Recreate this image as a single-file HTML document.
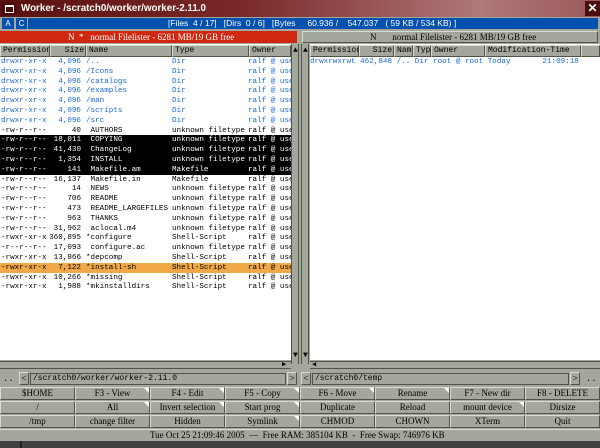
<!DOCTYPE html>
<html><head><meta charset="utf-8"><style>
*{margin:0;padding:0;box-sizing:border-box}
body{width:600px;height:448px;overflow:hidden;background:#a4a89c;position:relative;font-family:"Liberation Mono",monospace}
.a{position:absolute;white-space:pre}
.t{font-family:"Liberation Serif",serif}
.s{font-family:"Liberation Sans",sans-serif}
.row{position:absolute;height:10px;font-size:7.6px;line-height:10px;white-space:pre}
.row span{position:absolute;top:0}
.hd{position:absolute;top:45px;height:12px;background:#a4a89c;border:1px solid #d8dcd0;border-right-color:#505448;border-bottom-color:#505448;font-size:8px;line-height:10px;padding-left:2px;color:#000;overflow:hidden;white-space:nowrap;font-family:"Liberation Mono",monospace}
.btn{position:absolute;height:13px;width:75px;border:1px solid #d8dcd0;border-right-color:#505448;border-bottom-color:#505448;background:#a4a89c;font-family:"Liberation Serif",serif;font-size:9px;line-height:11px;text-align:center;color:#000}
.btn.m:after{content:"";position:absolute;right:0;top:0;border-left:5px solid transparent;border-top:5px solid #fff}
.sb{position:absolute;background:#a4a89c;border-left:1px solid #505448;border-right:1px solid #505448}
</style></head><body>
<div class="a" style="left:0;top:0;width:600px;height:17px;background:linear-gradient(90deg,#5a1010,#7a2828 40%,#b07878 80%,#9a5858)"></div>
<div class="a" style="left:2px;top:2px;width:14px;height:13px;background:#4a0c0c"></div>
<div class="a" style="left:5px;top:5px;width:9px;height:8px;border:1px solid #fff;border-top-width:2px"></div>
<div class="a s" style="left:21px;top:1px;font-size:9.8px;line-height:15px;color:#fff;font-weight:bold">Worker - /scratch0/worker/worker-2.11.0</div>
<div class="a" style="left:585px;top:1px;width:15px;height:15px;background:#4a0c0c;color:#fff;font:bold 12px/15px 'Liberation Sans',sans-serif;text-align:center">✕</div>
<div class="a" style="left:0;top:17px;width:600px;height:13px;background:#a4a89c"></div>
<div class="a s" style="left:2px;top:18px;width:12px;height:11px;background:#0050b0;color:#fff;font-size:8px;line-height:11px;text-align:center">A</div>
<div class="a s" style="left:16px;top:18px;width:11px;height:11px;background:#0050b0;color:#fff;font-size:8px;line-height:11px;text-align:center">C</div>
<div class="a" style="left:28px;top:18px;width:570px;height:11px;background:#0050b0"></div>
<div class="a s" style="left:168px;top:18px;font-size:8.5px;line-height:11px;color:#fff">[Files  4 / 17]   [Dirs  0 / 6]   [Bytes     60.936 /    547.037   ( 59 KB / 534 KB) ]</div>
<div class="a" style="left:0;top:31px;width:297px;height:12px;background:#d02810"></div>
<div class="a t" style="left:68px;top:31px;font-size:9px;line-height:12px;color:#fff">N  *   normal Filelister - 6281 MB/19 GB free</div>
<div class="a" style="left:302px;top:31px;width:296px;height:12px;background:#a4a89c;border:1px solid #d8dcd0;border-right-color:#505448;border-bottom-color:#505448"></div>
<div class="a t" style="left:370px;top:31px;font-size:9px;line-height:12px;color:#000">N       normal Filelister - 6281 MB/19 GB free</div>
<div class="a" style="left:0;top:44px;width:291px;height:316px;background:#fff"></div>
<div class="a" style="left:310px;top:44px;width:290px;height:316px;background:#fff"></div>
<div class="a" style="left:291px;top:44px;width:19px;height:330px;background:#a4a89c"></div>
<div class="sb" style="left:291px;top:44px;width:8px;height:320px"></div>
<div class="sb" style="left:301px;top:44px;width:8px;height:320px"></div>
<div class="a" style="left:293px;top:47px;font-size:8px;line-height:8px">▲</div>
<div class="a" style="left:303px;top:47px;font-size:8px;line-height:8px">▲</div>
<div class="a" style="left:293px;top:352px;font-size:8px;line-height:8px">▼</div>
<div class="a" style="left:303px;top:352px;font-size:8px;line-height:8px">▼</div>
<div class="hd" style="left:0;width:50px">Permission</div>
<div class="hd" style="left:50px;width:36px;text-align:right;padding-right:1px">Size</div>
<div class="hd" style="left:86px;width:86px">Name</div>
<div class="hd" style="left:172px;width:77px">Type</div>
<div class="hd" style="left:249px;width:42px">Owner</div>
<div class="hd" style="left:310px;width:49px">Permission</div>
<div class="hd" style="left:359px;width:35px;text-align:right;padding-right:1px">Size</div>
<div class="hd" style="left:394px;width:19px">Name</div>
<div class="hd" style="left:413px;width:18px">Type</div>
<div class="hd" style="left:431px;width:54px">Owner</div>
<div class="hd" style="left:485px;width:96px">Modification-Time</div>
<div class="hd" style="left:581px;width:19px"></div>
<div id="rows"></div>
<div class="row" style="left:310px;top:57px;width:290px;color:#1a6ad8"><span style="left:0">drwxrwxrwt 462,848 /.. Dir root @ root Today       21:09:18</span></div>
<div class="a" style="left:0;top:361px;width:291px;height:8px;background:#a4a89c;border-top:1px solid #505448;border-bottom:1px solid #505448"></div>
<div class="a" style="left:282px;top:361px;font-size:7px;line-height:8px">▶</div>
<div class="a" style="left:310px;top:361px;width:290px;height:8px;background:#a4a89c;border-top:1px solid #505448;border-bottom:1px solid #505448"></div>
<div class="a" style="left:312px;top:361px;font-size:7px;line-height:8px">◀</div>
<div class="a" style="left:0;top:371px;width:600px;height:16px;background:#a4a89c"></div>
<div class="a" style="left:3px;top:373px;font-size:9px;line-height:12px">..</div>
<div class="a s" style="left:19px;top:372px;width:10px;height:13px;border:1px solid #d8dcd0;border-right-color:#505448;border-bottom-color:#505448;font-size:9px;line-height:11px;text-align:center;color:#333">&lt;</div>
<div class="a" style="left:30px;top:373px;width:256px;height:12px;border:1px solid #505448;background:#a4a89c;font-size:8px;line-height:10px;padding-left:2px">/scratch0/worker/worker-2.11.0</div>
<div class="a s" style="left:287px;top:372px;width:10px;height:13px;border:1px solid #d8dcd0;border-right-color:#505448;border-bottom-color:#505448;font-size:9px;line-height:11px;text-align:center;color:#333">&gt;</div>
<div class="a s" style="left:301px;top:372px;width:10px;height:13px;border:1px solid #d8dcd0;border-right-color:#505448;border-bottom-color:#505448;font-size:9px;line-height:11px;text-align:center;color:#333">&lt;</div>
<div class="a" style="left:312px;top:373px;width:257px;height:12px;border:1px solid #505448;background:#a4a89c;font-size:8px;line-height:10px;padding-left:2px">/scratch0/temp</div>
<div class="a s" style="left:570px;top:372px;width:10px;height:13px;border:1px solid #d8dcd0;border-right-color:#505448;border-bottom-color:#505448;font-size:9px;line-height:11px;text-align:center;color:#333">&gt;</div>
<div class="a" style="left:586px;top:373px;font-size:9px;line-height:12px">..</div>
<div id="btns"></div>
<div class="a" style="left:0;top:429px;width:600px;height:12px;border-top:1px solid #d8dcd0;background:#a4a89c"></div>
<div class="a t" style="left:150px;top:429px;font-size:9px;line-height:12px">Tue Oct 25 21:09:46 2005  —  Free RAM: 385104 KB  -  Free Swap: 746976 KB</div>
<div class="a" style="left:0;top:441px;width:600px;height:7px;background:#404040"></div>
<div class="a" style="left:20px;top:441px;width:2px;height:7px;background:#202020"></div>
<script>
var rows=[
["drwxr-xr-x","4,096","/..","Dir","d"],["drwxr-xr-x","4,096","/Icons","Dir","d"],["drwxr-xr-x","4,096","/catalogs","Dir","d"],["drwxr-xr-x","4,096","/examples","Dir","d"],["drwxr-xr-x","4,096","/man","Dir","d"],["drwxr-xr-x","4,096","/scripts","Dir","d"],["drwxr-xr-x","4,096","/src","Dir","d"],
["-rw-r--r--","40"," AUTHORS","unknown filetype",""],["-rw-r--r--","18,011"," COPYING","unknown filetype","s"],["-rw-r--r--","41,430"," ChangeLog","unknown filetype","s"],["-rw-r--r--","1,354"," INSTALL","unknown filetype","s"],["-rw-r--r--","141"," Makefile.am","Makefile","s"],
["-rw-r--r--","16,137"," Makefile.in","Makefile",""],["-rw-r--r--","14"," NEWS","unknown filetype",""],["-rw-r--r--","706"," README","unknown filetype",""],["-rw-r--r--","473"," README_LARGEFILES","unknown filetype",""],["-rw-r--r--","963"," THANKS","unknown filetype",""],["-rw-r--r--","31,962"," aclocal.m4","unknown filetype",""],
["-rwxr-xr-x","360,895","*configure","Shell-Script",""],["-r--r--r--","17,093"," configure.ac","unknown filetype",""],["-rwxr-xr-x","13,866","*depcomp","Shell-Script",""],["-rwxr-xr-x","7,122","*install-sh","Shell-Script","o"],["-rwxr-xr-x","10,266","*missing","Shell-Script",""],["-rwxr-xr-x","1,988","*mkinstalldirs","Shell-Script",""]];
var h="";
rows.forEach(function(r,i){var top=57+i*9.8;var bg="transparent",c="#000";
if(r[4]=="d")c="#1a6ad8";if(r[4]=="s"){bg="#000";c="#fff"}if(r[4]=="o")bg="#f0a848";
h+='<div class="row" style="left:0;top:'+top+'px;width:291px;overflow:hidden;background:'+bg+';color:'+c+'"><span style="left:1px">'+r[0]+'</span><span style="left:45px;width:36px;text-align:right">'+r[1]+'</span><span style="left:86px">'+r[2]+'</span><span style="left:172px">'+r[3]+'</span><span style="left:248px">ralf @ users</span></div>';});
document.getElementById("rows").innerHTML=h;
var b=[["$HOME",0],["F3 - View",1],["F4 - Edit",1],["F5 - Copy",1],["F6 - Move",1],["Rename",1],["F7 - New dir",0],["F8 - DELETE",0],
["/",0],["All",1],["Invert selection",1],["Start prog",1],["Duplicate",0],["Reload",0],["mount device",1],["Dirsize",0],
["/tmp",0],["change filter",0],["Hidden",0],["Symlink",1],["CHMOD",0],["CHOWN",0],["XTerm",0],["Quit",0]];
var g="";b.forEach(function(x,i){var r=Math.floor(i/8),c=i%8;g+='<div class="btn'+(x[1]?' m':'')+'" style="left:'+(c*75)+'px;top:'+(387+r*14)+'px">'+x[0]+'</div>';});
document.getElementById("btns").innerHTML=g;
</script>
</body></html>
